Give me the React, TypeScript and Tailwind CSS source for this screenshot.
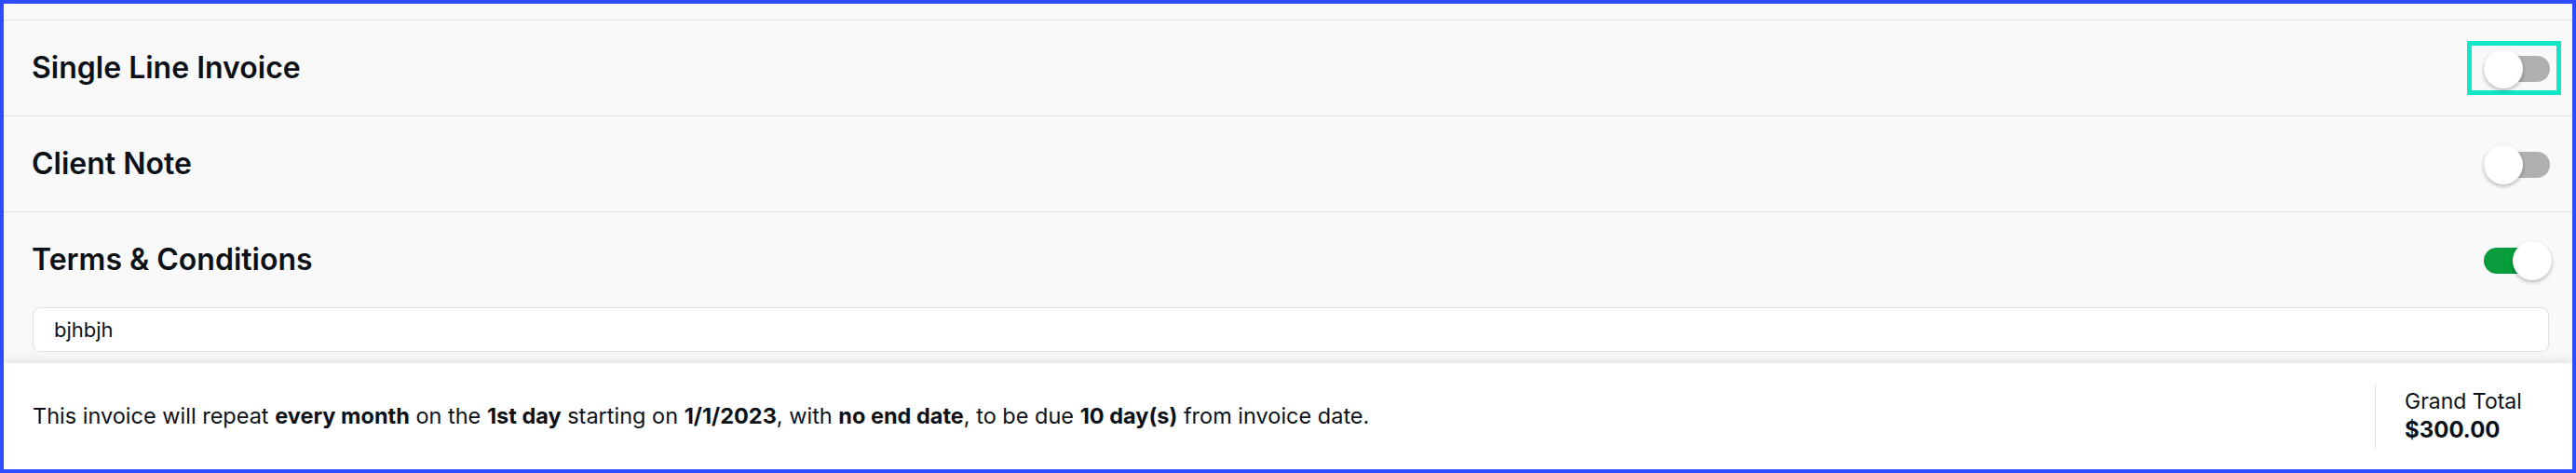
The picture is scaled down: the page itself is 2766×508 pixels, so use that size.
function Toggle({ on }: { on: boolean }) {
  return (
    <div className={`relative h-[28px] w-[71px] rounded-full ${on ? "bg-[#089c3c]" : "bg-[#b0b0b0]"}`}>
      <div
        className={`absolute top-[-7px] h-[42px] w-[42px] rounded-full bg-white shadow-[0_2px_4px_rgba(0,0,0,0.28)] ${
          on ? "right-[-2px]" : "left-0"
        }`}
      />
    </div>
  );
}

function Row({ title, on, highlight }: { title: string; on: boolean; highlight?: boolean }) {
  return (
    <div className="flex h-[102px] items-center justify-between pl-[30px] pr-[12px]">
      <span className="text-[32px] font-semibold text-[#0c1117]">{title}</span>
      <div
        className={`border-[5px] pl-[13px] pr-[7px] pt-[11px] pb-[9px] ${
          highlight ? "border-[#10e6c8]" : "border-transparent"
        }`}
      >
        <Toggle on={on} />
      </div>
    </div>
  );
}

export default function App() {
  return (
    <div className="flex h-[508px] w-[2766px] flex-col overflow-hidden border-4 border-[#2f4bff] bg-[#f9f9f9] font-['Inter',sans-serif]">
      <div className="flex flex-1 flex-col">
        <div className="h-[18px] border-b border-[#e0e0e0]" />
        <div className="border-b border-[#e0e0e0]">
          <Row title="Single Line Invoice" on={false} highlight />
        </div>
        <div className="border-b border-[#e0e0e0]">
          <Row title="Client Note" on={false} />
        </div>
        <Row title="Terms & Conditions" on />
        <div className="ml-[31px] mr-[25px] flex h-[48px] items-center rounded-[8px] border border-[#e0e0e0] bg-white pl-[22px] text-[22px] text-[#0c1117]">
          bjhbjh
        </div>
      </div>
      <div className="relative flex h-[114px] items-center bg-white pl-[31px] shadow-[0_-4px_10px_rgba(0,0,0,0.09)]">
        <p className="flex-1 text-[23.5px] text-[#0c1117]">
          This invoice will repeat <b className="font-bold">every month</b> on the <b className="font-bold">1st day</b> starting on{" "}
          <b className="font-bold">1/1/2023</b>, with <b className="font-bold">no end date</b>, to be due{" "}
          <b className="font-bold">10 day(s)</b> from invoice date.
        </p>
        <div className="flex h-[70px] w-[212px] flex-col justify-center border-l border-[#e0e0e0] pl-[31px] text-[#0c1117]">
          <span className="text-[23px] leading-[30px]">Grand Total</span>
          <span className="text-[24px] font-bold leading-[32px]">$300.00</span>
        </div>
      </div>
    </div>
  );
}
